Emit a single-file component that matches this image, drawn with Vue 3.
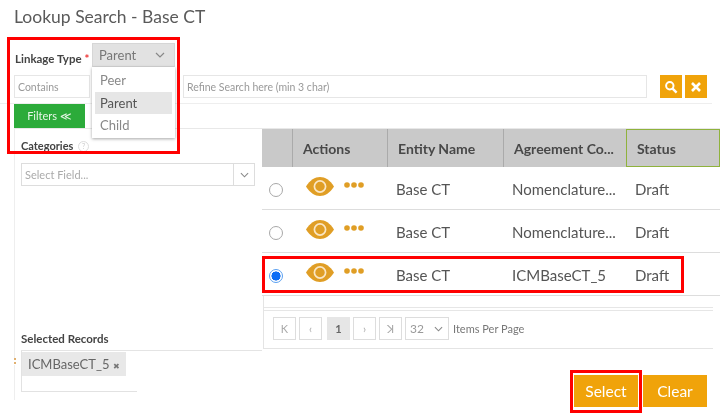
<script setup>
const rows = [
  { agreement: 'Nomenclature...', selected: false },
  { agreement: 'Nomenclature...', selected: false },
  { agreement: 'ICMBaseCT_5', selected: true },
]
const pager = ['K', '‹', '1', '›', 'ꓘ']
</script>

<template>
  <div class="page">
    <h1 class="title">Lookup Search - Base CT</h1>

    <div class="linkage">
      <label class="linkage-label">Linkage Type <span class="req">*</span></label>
      <div class="select-open">
        <span>Parent</span>
        <svg class="chev" width="10" height="6" viewBox="0 0 10 6"><path d="M1 1l4 4 4-4" fill="none" stroke="#888" stroke-width="1.2" /></svg>
      </div>
    </div>

    <div class="search">
      <div class="contains">Contains</div>
      <div class="refine">Refine Search here (min 3 char)</div>
      <button class="icon-btn first">
        <svg width="14" height="14" viewBox="0 0 14 14"><circle cx="5.8" cy="5.8" r="3.7" fill="none" stroke="#fff" stroke-width="2" /><path d="M8.6 8.6l4 4" stroke="#fff" stroke-width="2.4" /></svg>
      </button>
      <button class="icon-btn">
        <svg width="12" height="12" viewBox="0 0 12 12"><path d="M2 2l8 8M10 2l-8 8" stroke="#fff" stroke-width="2.6" /></svg>
      </button>
    </div>

    <button class="filters">Filters ≪</button>

    <div class="body">
      <aside class="side">
        <div>
          <div class="cat-label">Categories <span class="help">?</span></div>
          <div class="field-select">
            <span class="field-text">Select Field...</span>
            <span class="field-arrow">
              <svg width="9" height="6" viewBox="0 0 10 6"><path d="M1 1l4 4 4-4" fill="none" stroke="#888" stroke-width="1.2" /></svg>
            </span>
          </div>
        </div>
        <div>
          <div class="sel-label">Selected Records</div>
          <div class="sel-wrap">
            <div class="sel-box">
              <span class="chip">ICMBaseCT_5 <span class="chip-x">✖</span></span>
            </div>
          </div>
        </div>
      </aside>

      <main class="content">
        <table class="grid">
          <colgroup>
            <col class="c0" /><col class="c1" /><col class="c2" /><col class="c3" /><col />
          </colgroup>
          <thead>
            <tr>
              <th></th>
              <th>Actions</th>
              <th>Entity Name</th>
              <th>Agreement Co...</th>
              <th class="active">Status</th>
            </tr>
          </thead>
          <tbody>
            <tr v-for="(row, i) in rows" :key="i">
              <td class="radio-cell"><input type="radio" name="rec" class="radio" :checked="row.selected" /></td>
              <td class="actions">
                <svg width="28" height="19" viewBox="0 0 28 19">
                  <path d="M0 9.5C4 3 9 0 14 0s10 3 14 9.5C24 16 19 19 14 19S4 16 0 9.5z" fill="#e09e25" />
                  <circle cx="14" cy="9.5" r="5.6" fill="none" stroke="#fae6c4" stroke-width="1.7" />
                </svg>
                <svg class="dots" width="20" height="6" viewBox="0 0 20 6">
                  <circle cx="3" cy="3" r="2.8" fill="#e09e25" /><circle cx="10" cy="3" r="2.8" fill="#e09e25" /><circle cx="17" cy="3" r="2.8" fill="#e09e25" />
                </svg>
              </td>
              <td>Base CT</td>
              <td>{{ row.agreement }}</td>
              <td>Draft</td>
            </tr>
          </tbody>
        </table>

        <div class="pager">
          <span v-for="(p, i) in pager" :key="i" class="pg" :class="{ cur: p === '1' }">{{ p }}</span>
          <span class="pg-select">32
            <svg width="9" height="6" viewBox="0 0 10 6"><path d="M1 1l4 4 4-4" fill="none" stroke="#888" stroke-width="1.2" /></svg>
          </span>
          <span class="pg-label">Items Per Page</span>
        </div>

        <div class="foot">
          <button class="act">Select</button>
          <button class="act">Clear</button>
        </div>
      </main>
    </div>

    <!-- overlays -->
    <ul class="menu">
      <li>Peer</li>
      <li class="hl">Parent</li>
      <li>Child</li>
    </ul>
    <i class="handle"></i>
    <i class="mark m1"></i>
    <i class="mark m2"></i>
    <i class="mark m3"></i>
  </div>
</template>

<style>
html, body { margin: 0; background: #fff; }
</style>

<style scoped>
.page {
  position: relative;
  width: 720px;
  height: 418px;
  overflow: hidden;
  background: #fff;
  color: #555;
  font-family: Lato, "Open Sans", sans-serif;
  filter: blur(0.3px);
}
button { border: 0; padding: 0; font-family: inherit; }
.title {
  margin: 0;
  height: 35px;
  padding-left: 14px;
  font-size: 17.5px;
  font-weight: 400;
  line-height: 34px;
  color: #5a5a5a;
}
.linkage {
  display: flex;
  height: 24px;
  margin: 8px 0 8px 15px;
}
.linkage-label {
  width: 77px;
  margin-top: 7px;
  font-size: 11.5px;
  font-weight: 700;
  line-height: 18px;
  color: #444;
  white-space: nowrap;
}
.req { color: #e33; }
.select-open {
  box-sizing: border-box;
  width: 83px;
  display: flex;
  align-items: center;
  justify-content: space-between;
  padding: 0 9px 0 6px;
  background: #e2e2e2;
  border: 1px solid #d6d6d6;
  font-size: 13px;
  color: #777;
}
.search {
  display: flex;
  height: 23px;
  margin-right: 8px;
  padding: 0 4px 5px 14px;
  border-bottom: 1px solid #eee;
  font-size: 10.5px;
  color: #999;
}
.contains, .refine {
  box-sizing: border-box;
  display: flex;
  align-items: center;
  border: 1px solid #e6e6e6;
  padding-left: 3px;
}
.contains { width: 76px; }
.refine { margin-left: 93px; width: 464px; }
.icon-btn {
  width: 22px;
  height: 23px;
  margin-left: 3px;
  background: #f0a30a;
  display: flex;
  align-items: center;
  justify-content: center;
}
.icon-btn.first { margin-left: 13px; }
.filters {
  display: block;
  width: 71px;
  height: 24px;
  margin: 0 0 0 14px;
  background: #2cab3a;
  color: #e8f6e8;
  font-size: 11px;
}
.body {
  display: grid;
  grid-template-columns: 247px 1fr;
  grid-template-rows: 272px;
  height: 272px;
  margin-left: 14px;
  border-top: 1px solid #e8e8e8;
  border-left: 1px solid #eee;
  box-sizing: border-box;
}
.side {
  display: flex;
  flex-direction: column;
  justify-content: space-between;
  padding: 9px 0 9px 6px;
}
.cat-label {
  font-size: 11px;
  font-weight: 700;
  line-height: 15px;
  color: #444;
}
.sel-label {
  margin-bottom: 4px;
  font-size: 11.5px;
  font-weight: 700;
  line-height: 15px;
  color: #444;
}
.help {
  display: inline-block;
  width: 9px;
  height: 9px;
  margin-left: 2px;
  border: 1px solid #ddd;
  border-radius: 50%;
  font-size: 7px;
  font-weight: 400;
  line-height: 9px;
  text-align: center;
  color: #ccc;
  vertical-align: 1px;
}
.field-select {
  box-sizing: border-box;
  display: flex;
  width: 234px;
  height: 23px;
  margin-top: 10px;
  border: 1px solid #ddd;
  font-size: 11px;
  color: #aaa;
}
.field-text { flex: 1; padding-left: 3px; line-height: 21px; }
.field-arrow {
  display: flex;
  align-items: center;
  justify-content: center;
  width: 20px;
  border-left: 1px solid #ddd;
}
.sel-wrap { border-top: 1px solid #e4e4e4; }
.sel-box {
  box-sizing: border-box;
  width: 116px;
  height: 41px;
  border: 1px solid #e2e2e2;
  border-width: 0 0 1px 1px;
}
.chip {
  display: inline-block;
  width: 104px;
  height: 24px;
  margin-top: 1px;
  padding-left: 6px;
  box-sizing: border-box;
  background: #e8e8e8;
  font-size: 13px;
  line-height: 24px;
  color: #666;
  white-space: nowrap;
}
.chip-x { font-size: 8px; color: #777; }
.content { min-width: 0; }
.grid {
  width: 458px;
  table-layout: fixed;
  border-collapse: separate;
  border-spacing: 0;
  font-size: 15px;
  color: #555;
}
.c0 { width: 30px; }
.c1 { width: 95px; }
.c2 { width: 116px; }
.c3 { width: 123px; }
.grid th {
  box-sizing: border-box;
  height: 38px;
  padding: 0 0 0 10px;
  background: #c9c9c9;
  border-left: 1px solid #aaa;
  font-size: 14px;
  font-weight: 700;
  text-align: left;
  color: #484848;
  white-space: nowrap;
}
.grid th:first-child { border-left: 0; }
.grid th.active { border: 1px solid #8fb23c; }
.grid td {
  height: 43px;
  box-sizing: border-box;
  padding: 2px 0 0 9px;
  border-bottom: 1px solid #ddd;
  white-space: nowrap;
}
.grid .radio-cell { padding: 2px 0 0 7px; }
.radio {
  appearance: none;
  display: block;
  box-sizing: border-box;
  width: 14px;
  height: 14px;
  margin: 2px 0 0;
  border: 1.5px solid #a8a8a8;
  border-radius: 50%;
  background: #fff;
}
.radio:checked {
  border-color: #5aa0f0;
  background: radial-gradient(circle, #0a6cf5 0 4.3px, #fff 4.8px);
}
.grid .actions { padding: 0 0 4px 14px; }
.actions svg { display: inline-block; vertical-align: middle; }
.dots { margin-left: 10px; margin-bottom: 4px; }
.pager {
  box-sizing: border-box;
  display: flex;
  align-items: center;
  height: 53px;
  width: 450px;
  margin-left: 1px;
  padding: 13px 0 0 9px;
  border-left: 1px solid #e4e4e4;
  border-bottom: 1px solid #e4e4e4;
  background:
    linear-gradient(#e6e6e6, #e6e6e6) 0 11px / 100% 1px no-repeat,
    linear-gradient(#e6e6e6, #e6e6e6) 0 14px / 100% 1px no-repeat;
}
.pg {
  box-sizing: border-box;
  display: flex;
  align-items: center;
  justify-content: center;
  width: 23px;
  height: 23px;
  margin-right: 3px;
  border: 1px solid #ddd;
  font-size: 11px;
  color: #aaa;
}
.pg:nth-child(2) { margin-right: 5px; }
.pg.cur {
  background: #e6e6e6;
  border-color: #e6e6e6;
  font-weight: 700;
  color: #666;
}
.pg-select {
  box-sizing: border-box;
  display: flex;
  align-items: center;
  justify-content: space-between;
  width: 44px;
  height: 23px;
  padding: 0 5px 0 4px;
  border: 1px solid #ddd;
  font-size: 12px;
  color: #999;
}
.pg-label { margin-left: 4px; font-size: 11px; color: #777; }
.foot {
  display: flex;
  gap: 5px;
  justify-content: flex-end;
  padding: 26px 13px 0 0;
}
.act {
  width: 64px;
  height: 32px;
  background: #f0a30a;
  color: #fff;
  font-size: 15.5px;
}
.menu {
  position: absolute;
  left: 92px;
  top: 67px;
  box-sizing: border-box;
  width: 83px;
  height: 71px;
  margin: 0;
  padding: 2px 3px;
  list-style: none;
  background: #fff;
  box-shadow: 0 1px 3px rgba(0, 0, 0, 0.35);
  font-size: 13px;
  color: #888;
}
.menu li { height: 22.5px; line-height: 22px; padding-left: 5px; }
.menu .hl { background: #e6e6e6; color: #555; }
.handle {
  position: absolute;
  left: 14px;
  top: 358px;
  width: 2px;
  height: 7px;
  background: repeating-linear-gradient(#e0b070 0 2px, #fff 2px 4px);
}
.mark { position: absolute; box-sizing: border-box; border: 3px solid #f00; }
.m1 { left: 7px; top: 37px; width: 173px; height: 117px; }
.m2 { left: 262px; top: 256px; width: 422px; height: 37px; }
.m3 { left: 570px; top: 370px; width: 72px; height: 43px; }
</style>
